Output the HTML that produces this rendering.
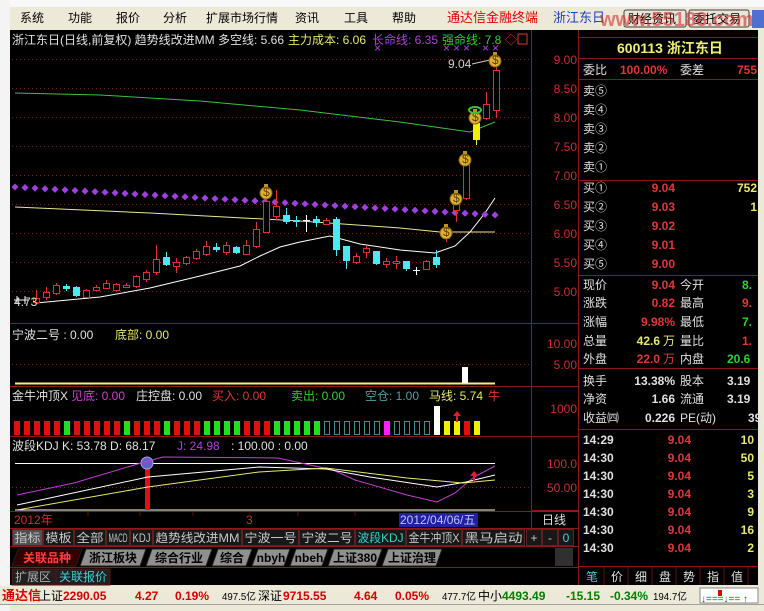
<!DOCTYPE html>
<html><head><meta charset="utf-8"><style>
html,body{margin:0;padding:0;width:764px;height:611px;overflow:hidden;background:#d4d0c8}
svg{display:block}
text{font-family:"Liberation Sans","Noto Sans CJK SC",sans-serif;font-size:12px}
.m{font-size:12px;fill:#000}
.r{fill:#e03838}.w{fill:#e0e0e0}.y{fill:#e8e870}.g{fill:#30d030}.c{fill:#40d0d0}.p{fill:#b040e0}
.ax{fill:#c83030;font-size:13px}
.rp{font-size:14px}
</style></head><body>
<svg id="s" width="764" height="611" viewBox="0 0 764 611" xmlns="http://www.w3.org/2000/svg">
<rect x="0" y="0" width="764" height="611" fill="#ece9d8"/>
<rect x="0" y="0" width="764" height="7" fill="#f8f8f8"/>
<rect x="0" y="0" width="10" height="611" fill="#f4f4f4"/>
<g class="m">
<text x="20" y="22">系统</text><text x="68" y="22">功能</text><text x="116" y="22">报价</text><text x="163" y="22">分析</text>
<text x="206" y="22">扩展市场行情</text><text x="295" y="22">资讯</text><text x="344" y="22">工具</text><text x="392" y="22">帮助</text>
<text x="447" y="22" style="fill:#e00000;font-size:13px">通达信金融终端</text>
<text x="553" y="22" style="fill:#2040c0;font-size:13px">浙江东日</text>
</g>
<rect x="624" y="10" width="62" height="17" fill="#e8e4d8" stroke="#404040" rx="2"/>
<text x="628" y="23" class="m">财经资讯</text>
<rect x="689" y="10" width="60" height="17" fill="#e8e4d8" stroke="#404040" rx="2"/>
<text x="693" y="23" class="m">委托交易</text>
<text x="600" y="26" style="fill:#d03030;font-size:20px;font-weight:bold;opacity:.6">www.55188.com</text>
<rect x="752" y="10" width="12" height="18" fill="#5070d0"/>
<rect x="10" y="30" width="748" height="555" fill="#000"/>
<g id="grid"></g>
<g stroke="#901818" stroke-width="1" fill="none">
<line x1="531.5" y1="30" x2="531.5" y2="528"/>
<line x1="578.5" y1="30" x2="578.5" y2="585"/>
<line x1="10" y1="323.5" x2="578" y2="323.5"/>
<line x1="10" y1="386.5" x2="578" y2="386.5"/>
<line x1="10" y1="436.5" x2="578" y2="436.5"/>
<line x1="10" y1="511.5" x2="578" y2="511.5"/>
<line x1="10" y1="528.5" x2="578" y2="528.5"/>
<line x1="10" y1="546.5" x2="578" y2="546.5"/>
<line x1="10" y1="567.5" x2="578" y2="567.5"/>
<rect x="531.5" y="436.5" width="47" height="74"/>
</g>
<text x="12" y="44" class="w">浙江东日(日线,前复权) 趋势线改进MM  多空线: 5.66</text>
<text x="288" y="44" class="y">主力成本: 6.06</text>
<text x="372" y="44" class="p">长命线: 6.35</text>
<text x="442" y="44" class="g">强命线: 7.8</text>
<text x="505" y="44" class="r">◇</text><rect x="518" y="34" width="9" height="10" fill="none" stroke="#e03838"/>
<g class="ax" text-anchor="end">
<text x="577" y="64">9.00</text><text x="577" y="93">8.50</text><text x="577" y="122">8.00</text><text x="577" y="151">7.50</text><text x="577" y="180">7.00</text><text x="577" y="209">6.50</text><text x="577" y="238">6.00</text><text x="577" y="267">5.50</text><text x="577" y="296">5.00</text>
<text x="577" y="348">10.00</text><text x="577" y="369">5.00</text>
<text x="577" y="413">1000</text>
<text x="577" y="468">100.0</text><text x="577" y="492">50.00</text>
</g>
<polyline fill="none" stroke="#40c040" stroke-width="1" points="15,93 100,95 200,101 300,110 400,122 470,132 495,122"/>
<polyline fill="none" stroke="#e8e890" stroke-width="1" points="15,207 150,213 300,221 400,228 440,232 495,232"/>
<polyline fill="none" stroke="#fff" stroke-width="1" points="36,303 100,297 150,288 200,276 240,266 260,256 280,247 300,242 330,236 360,244 400,250 435,253 455,246 470,232 485,213 495,198"/>
<g id="dots"></g>
<g id="cand"></g>
<text x="14" y="306" class="w">4.73</text>
<text x="448" y="68" style="fill:#d0d0d0">9.04</text>
<polyline points="472,64 490,60" stroke="#ccc" fill="none"/>
<g id="bags"></g>
<text x="12" y="339" class="w">宁波二号 : 0.00</text><text x="115" y="339" class="y">底部: 0.00</text>
<line x1="15" y1="383.5" x2="495" y2="383.5" stroke="#f0f080" stroke-width="2"/>
<rect x="462" y="367" width="6" height="16" fill="#fff"/>
<text x="12" y="400" class="w">金牛冲顶X</text><text x="71" y="400" style="fill:#d040d0">见底: 0.00</text>
<text x="136" y="400" class="w">庄控盘: 0.00</text><text x="212" y="400" class="r">买入: 0.00</text>
<text x="291" y="400" class="g">卖出: 0.00</text><text x="365" y="400" style="fill:#50a0a0">空仓: 1.00</text>
<text x="429" y="400" class="y">马线: 5.74</text><text x="488" y="400" class="r">牛</text>
<g id="bars"></g>
<text x="12" y="450" class="w">波段KDJ  K: 53.78  D: 68.17</text><text x="177" y="450" class="p">J: 24.98</text><text x="231" y="450" class="w">: 100.00  : 0.00</text>
<line x1="15" y1="463.5" x2="495" y2="463.5" stroke="#fff"/>
<line x1="15" y1="510" x2="495" y2="510" stroke="#fff"/>
<rect x="145" y="463" width="5" height="47" fill="#e01010"/>
<circle cx="147" cy="463" r="6" fill="#6060c0" stroke="#a0a0ff"/>
<polyline fill="none" stroke="#c040d0" points="17,495 74,483 141,463 163,457 278,458 333,470 355,480 407,495 437,502 455,493 474,477 495,466"/>
<polyline fill="none" stroke="#fff" points="17,505 148,477 259,467 326,469 370,477 437,487 466,482 495,475"/>
<polyline fill="none" stroke="#e8e870" points="17,510 148,487 259,472 326,468 407,478 463,483 495,480"/>
<path d="M474 471 l-4 5 h3 v5 h2 v-5 h3z" fill="#e02020"/>
<text x="14" y="524" style="fill:#c83030">2012年</text>
<text x="246" y="524" style="fill:#c83030">3</text>
<rect x="399" y="513" width="79" height="14" fill="#2020a0"/>
<text x="400" y="524" style="fill:#c0c0ff">2012/04/06/五</text>
<text x="542" y="524" class="w">日线</text>
<g stroke="#601010"><line x1="88" y1="512" x2="88" y2="516"/><line x1="140" y1="512" x2="140" y2="516"/><line x1="193" y1="512" x2="193" y2="516"/><line x1="298" y1="512" x2="298" y2="516"/><line x1="355" y1="512" x2="355" y2="516"/></g>
<g id="tabs"></g>
<rect x="10" y="547" width="568" height="20" fill="#000"/>
<g id="tabs2"></g>
<rect x="555" y="548" width="18" height="18" fill="#303030"/>
<rect x="12" y="569" width="44" height="16" fill="#202020" stroke="#601010"/>
<text x="15" y="581" style="fill:#b0b0b0">扩展区</text>
<rect x="56" y="569" width="54" height="16" fill="#202020" stroke="#601010"/>
<text x="59" y="581" class="c">关联报价</text>
<g stroke="#901818"><line x1="578" y1="37.5" x2="758" y2="37.5"/><line x1="578" y1="58.5" x2="758" y2="58.5"/><line x1="578" y1="79.5" x2="758" y2="79.5"/><line x1="578" y1="180.5" x2="758" y2="180.5"/><line x1="578" y1="275.5" x2="758" y2="275.5"/><line x1="578" y1="368.5" x2="758" y2="368.5"/><line x1="578" y1="429.5" x2="758" y2="429.5"/><line x1="578" y1="566.5" x2="758" y2="566.5"/></g>
<text x="617" y="53" style="fill:#f0f070;font-size:14px;font-weight:bold">600113 浙江东日</text>
<g class="rp">
<text x="583" y="74" class="w">委比</text><text x="620" y="74" class="r" style="font-weight:bold">100.00%</text><text x="680" y="74" class="w">委差</text><text x="757" y="74" class="r" text-anchor="end" style="font-weight:bold">755</text>
<text x="583" y="95" class="w">卖⑤</text><text x="583" y="114" class="w">卖④</text><text x="583" y="133" class="w">卖③</text><text x="583" y="152" class="w">卖②</text><text x="583" y="171" class="w">卖①</text>
<g style="font-weight:bold">
<text x="583" y="192" class="w" style="font-weight:normal">买①</text><text x="675" y="192" class="r" text-anchor="end">9.04</text><text x="757" y="192" class="y" text-anchor="end">752</text>
<text x="583" y="211" class="w" style="font-weight:normal">买②</text><text x="675" y="211" class="r" text-anchor="end">9.03</text><text x="757" y="211" class="y" text-anchor="end">1</text>
<text x="583" y="230" class="w" style="font-weight:normal">买③</text><text x="675" y="230" class="r" text-anchor="end">9.02</text>
<text x="583" y="249" class="w" style="font-weight:normal">买④</text><text x="675" y="249" class="r" text-anchor="end">9.01</text>
<text x="583" y="268" class="w" style="font-weight:normal">买⑤</text><text x="675" y="268" class="r" text-anchor="end">9.00</text>
<text x="742" y="289" class="g">8.</text><text x="675" y="289" class="r" text-anchor="end">9.04</text>
<text x="675" y="307" class="r" text-anchor="end">0.82</text><text x="742" y="307" class="r">9.</text>
<text x="675" y="326" class="r" text-anchor="end">9.98%</text><text x="742" y="326" class="g">7.</text>
<text x="660" y="345" class="y" text-anchor="end">42.6</text><text x="675" y="345" class="y" text-anchor="end" style="font-weight:normal">万</text><text x="742" y="345" class="r">1.</text>
<text x="660" y="363" class="r" text-anchor="end">22.0</text><text x="675" y="363" class="r" text-anchor="end" style="font-weight:normal">万</text><text x="727" y="363" class="g">20.6</text>
<text x="675" y="385" class="w" text-anchor="end">13.38%</text><text x="727" y="385" class="w">3.19</text>
<text x="675" y="403" class="w" text-anchor="end">1.66</text><text x="727" y="403" class="w">3.19</text>
<text x="675" y="422" class="w" text-anchor="end">0.226</text><text x="748" y="422" class="w">39</text>
</g>
<text x="583" y="289" class="w">现价</text><text x="680" y="289" class="w">今开</text>
<text x="583" y="307" class="w">涨跌</text><text x="680" y="307" class="w">最高</text>
<text x="583" y="326" class="w">涨幅</text><text x="680" y="326" class="w">最低</text>
<text x="583" y="345" class="w">总量</text><text x="680" y="345" class="w">量比</text>
<text x="583" y="363" class="w">外盘</text><text x="680" y="363" class="w">内盘</text>
<text x="583" y="385" class="w">换手</text><text x="680" y="385" class="w">股本</text>
<text x="583" y="403" class="w">净资</text><text x="680" y="403" class="w">流通</text>
<text x="583" y="422" class="w">收益㈣</text><text x="680" y="422" class="w">PE(动)</text>
</g>
<g id="ticks" class="rp" style="font-weight:bold"></g>
<g style="font-size:13px"><text x="586" y="581" class="c">笔</text><text x="611" y="581" class="w">价</text><text x="635" y="581" class="w">细</text><text x="659" y="581" class="w">盘</text><text x="683" y="581" class="w">势</text><text x="707" y="581" class="w">指</text><text x="731" y="581" class="w">值</text></g>
<g stroke="#601010"><line x1="604" y1="567" x2="604" y2="585"/><line x1="628" y1="567" x2="628" y2="585"/><line x1="652" y1="567" x2="652" y2="585"/><line x1="676" y1="567" x2="676" y2="585"/><line x1="700" y1="567" x2="700" y2="585"/><line x1="724" y1="567" x2="724" y2="585"/><line x1="748" y1="567" x2="748" y2="585"/></g>
<rect x="0" y="586" width="764" height="18" fill="#ece9d8"/>
<line x1="0" y1="604.5" x2="764" y2="604.5" stroke="#a0a0a0"/>
<g style="font-size:12px;font-weight:bold">
<text x="2" y="600" style="fill:#e00000;font-size:13px">通达信</text>
<text x="39" y="600" style="fill:#000;font-weight:normal">上证</text><text x="63" y="600" style="fill:#d00000">2290.05</text>
<text x="135" y="600" style="fill:#d00000">4.27</text><text x="175" y="600" style="fill:#d00000">0.19%</text>
<text x="222" y="600" style="fill:#000;font-weight:normal;font-size:10px" textLength="34" lengthAdjust="spacingAndGlyphs">497.5亿</text>
<text x="258" y="600" style="fill:#000;font-weight:normal">深证</text><text x="283" y="600" style="fill:#d00000">9715.55</text>
<text x="354" y="600" style="fill:#d00000">4.64</text><text x="395" y="600" style="fill:#d00000">0.05%</text>
<text x="442" y="600" style="fill:#000;font-weight:normal;font-size:10px" textLength="34" lengthAdjust="spacingAndGlyphs">477.7亿</text>
<text x="478" y="600" style="fill:#000;font-weight:normal">中小</text><text x="502" y="600" style="fill:#008000">4493.49</text>
<text x="566" y="600" style="fill:#008000">-15.15</text><text x="610" y="600" style="fill:#008000">-0.34%</text>
<text x="653" y="600" style="fill:#000;font-weight:normal;font-size:10px" textLength="34" lengthAdjust="spacingAndGlyphs">194.7亿</text>
</g>
<rect x="700" y="588" width="58" height="15" fill="#fff" stroke="#888"/>
<rect x="718" y="590" width="4" height="6" fill="#e00000"/>
<text x="701" y="602" style="fill:#008000;font-size:10px">↓===↓== ↑</text>
</svg>
<script>
var NS="http://www.w3.org/2000/svg";
function el(p,t,a,txt){var e=document.createElementNS(NS,t);for(var k in a)e.setAttribute(k,a[k]);if(txt)e.textContent=txt;document.getElementById(p).appendChild(e);return e;}
[59,88,117,146,175,204,233,262,291,364,487].forEach(function(y){el("grid","line",{x1:12,y1:y+.5,x2:531,y2:y+.5,stroke:"#901818","stroke-dasharray":"1,3"});});
for(var x=15;x<=496;x+=10){var y=187+(x-15)/481*28;el("dots","rect",{x:x-2.5,y:y-2.5,width:5,height:5,fill:"#a040e0",transform:"rotate(45 "+x+" "+y+")"});}
[377,446,456,466,485,495].forEach(function(x){el("dots","text",{x:x-3,y:52,fill:"#b040e0","font-size":"9"},"×");});
var C=[[298,302,290,304,'r'],[292,297,287,300,'r'],[285,293,283,295,'r'],[286,289,284,291,'c'],[287,296,286,297,'c'],[290,297,289,298,'r'],[287,290,285,291,'r'],[283,288,280,289,'r'],[284,290,283,291,'r'],[285,287,283,288,'r'],[276,286,275,288,'r'],[272,279,270,282,'r'],[259,272,245,275,'r'],[257,265,252,266,'c'],[262,266,258,273,'r'],[257,263,256,265,'r'],[251,258,249,260,'r'],[246,254,241,256,'r'],[247,250,243,252,'c'],[245,252,242,255,'r'],[247,253,246,254,'c'],[245,254,240,255,'r'],[229,246,222,248,'r'],[201,232,190,233,'r'],[206,216,190,220,'r'],[215,222,208,224,'c'],[220,222,216,227,'c'],[220,221,215,232,'w'],[219,223,216,227,'c'],[220,224,218,225,'r'],[219,250,217,256,'c'],[246,261,246,269,'c'],[256,262,253,264,'r'],[248,252,246,258,'r'],[251,264,251,265,'c'],[261,264,258,268,'r'],[261,263,256,269,'r'],[261,269,261,271,'c'],[270,271,267,275,'w'],[261,269,260,270,'r'],[257,265,250,268,'c'],[228,238,224,242,'r'],[200,210,198,222,'r'],[160,198,158,200,'r'],[123,140,116,145,'y'],[104,118,92,120,'r'],[70,110,60,118,'r']];
C.forEach(function(c,i){var x=36+i*10;var col={r:"#e03030",c:"#50e8f0",w:"#ffffff",y:"#f0f000"}[c[4]];
el("cand","line",{x1:x+.5,y1:c[2],x2:x+.5,y2:c[3],stroke:col});
if(c[4]=='r')el("cand","rect",{x:x-2.5,y:c[0]+.5,width:6,height:Math.max(1,c[1]-c[0]),fill:"#000",stroke:col});
else if(c[4]=='w')el("cand","line",{x1:x-3,y1:c[0]+.5,x2:x+4,y2:c[0]+.5,stroke:col});
else el("cand","rect",{x:x-3,y:c[0],width:7,height:Math.max(1,c[1]-c[0]),fill:col});});
el("cand","line",{x1:14,y1:300,x2:28,y2:300,stroke:"#fff"});el("cand","line",{x1:17,y1:296,x2:17,y2:304,stroke:"#fff"});el("cand","line",{x1:25,y1:296,x2:25,y2:304,stroke:"#fff"});
[[266,193],[446,233],[456,199],[465,160],[475,118],[495,61]].forEach(function(b){
el("bags","circle",{cx:b[0],cy:b[1],r:6,fill:"#e0b030",stroke:"#806010"});
el("bags","rect",{x:b[0]-2,y:b[1]-9,width:4,height:3,fill:"#c09020"});
el("bags","text",{x:b[0]-3,y:b[1]+3,fill:"#604000","font-size":"8"},"$");});
el("bags","ellipse",{cx:475,cy:110,rx:6,ry:3,fill:"none",stroke:"#40c040","stroke-width":2});
var S="RRRRRGRRRRRGRRRGRRRGGGGRRRGGGGGCCCCCCMCCCCWYYRY";
for(var i=0;i<S.length;i++){var x=14+i*10,t=S[i];
if(t=='C')el("bars","rect",{x:x+.5,y:421.5,width:5,height:13,fill:"none",stroke:"#409090"});
else{var col={R:"#e01010",G:"#20e020",M:"#ff20ff",W:"#ffffff",Y:"#f0f000"}[t];el("bars","rect",{x:x,y:t=='W'?406:421,width:6,height:t=='W'?29:14,fill:col});}}
el("bars","path",{d:"M457 411 l-4 5 h3 v6 h2 v-6 h3z",fill:"#e02020"});
var T=[["指标",12,30,1],["模板",43,30],["全部",74,31],["MACD",106,23],["KDJ",130,22],["趋势线改进MM",153,88],["宁波一号",242,56],["宁波二号",299,55],["波段KDJ",355,50,0,"#40d0d0"],["金牛冲顶X",406,55],["黑马启动",462,62],["+",526,15],["-",542,15],["0",558,15,0,"#40d0d0"]];
T.forEach(function(t){el("tabs","rect",{x:t[1]+.5,y:529.5,width:t[2],height:16,fill:t[3]?"#505050":"#181818",stroke:"#602020"});
var a={x:t[1]+t[2]/2+.5,y:542,"text-anchor":"middle",fill:t[4]||"#c8c8c8","font-size":/^[A-Z]/.test(t[0])?"10":"12"};
if(t[2]>20&&t[0].length>1){a.textLength=t[2]-4;a.lengthAdjust="spacingAndGlyphs";}
el("tabs","text",a,t[0]);});
var U=[["关联品种",12,70,1],["浙江板块",80,66],["综合行业",146,66],["综合",212,40],["nbyh",252,38],["nbeh",290,38],["上证380",328,54],["上证治理",382,60]];
U.forEach(function(t){var x=t[1],w=t[2];el("tabs2","path",{d:"M"+x+" 566 L"+(x+6)+" 549 H"+(x+w)+" L"+(x+w-6)+" 566Z",fill:t[3]?"#300000":"#909090",stroke:"#202020"});
el("tabs2","text",{x:x+w/2,y:562,"text-anchor":"middle",fill:t[3]?"#ff4040":"#000","font-weight":"bold","font-size":"13"},t[0]);});
var K=[["14:29","10"],["14:30","50"],["14:30","5"],["14:30","3"],["14:30","9"],["14:30","16"],["14:30","2"]];
K.forEach(function(k,i){var y=444+i*18;el("ticks","text",{x:583,y:y,fill:"#e0e0e0"},k[0]);el("ticks","text",{x:691,y:y,fill:"#e03838","text-anchor":"end"},"9.04");el("ticks","text",{x:754,y:y,fill:"#e8e870","text-anchor":"end"},k[1]);});
</script>
</body></html>
